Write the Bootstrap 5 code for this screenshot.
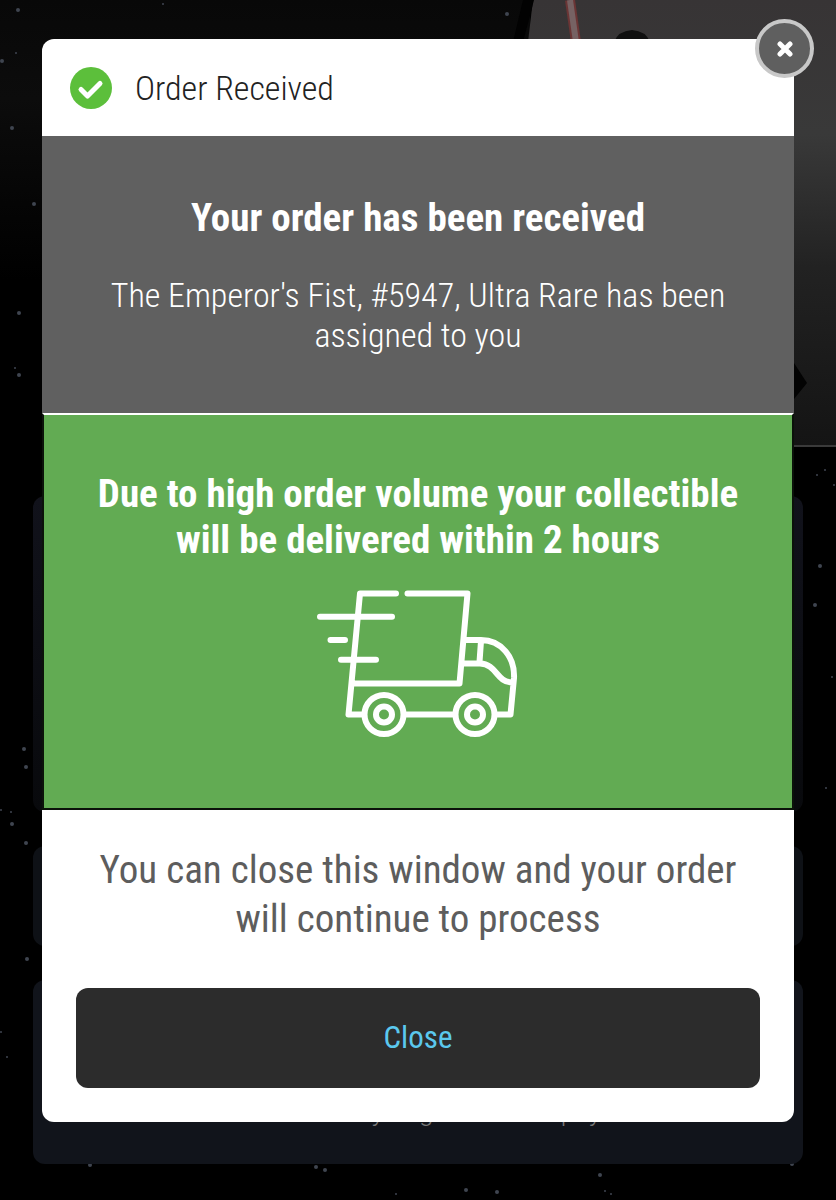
<!DOCTYPE html>
<html lang="en">
<head>
<meta charset="utf-8">
<meta name="viewport" content="width=device-width, initial-scale=1">
<title>Order Received</title>
<link href="https://cdn.jsdelivr.net/npm/bootstrap@5.3.0/dist/css/bootstrap.min.css" rel="stylesheet">
<style>
  body { background: #000; font-family: "Roboto Condensed", Roboto, "Liberation Sans", sans-serif; }
  .stage { display: grid; min-height: 100vh; overflow: hidden; }
  .stage > * { grid-area: 1 / 1; min-width: 0; }
  .scene { width: 100%; height: 100%; min-height: 0; contain: size; }
  .backdrop-page { padding: 496px 33px 36px; }
  .panel { border-radius: 12px; background: #11141b; }
  .panel-a { height: 316px; background: linear-gradient(#11121b, #08090c); }
  .panel-b { height: 100px; background: #0e1116; }
  .panel-c { height: 184px; color: #777; font: 300 26px/32px Roboto, sans-serif; padding-bottom: 36px; }
  .dialog-wrap { padding: 39px 42px; }
  .dialog { border-radius: 12px; background: #fff; }
  .light-text { font-family: "Roboto Condensed Light", "Roboto Condensed", sans-serif; font-weight: 300; font-size: 34px; line-height: 40px; }
  .dialog-head { min-height: 97px; padding: 0 28px; gap: 23px; }
  .dialog-head h1 { color: #222; }
  .received { background: #606060; padding: 59px 56px 58px; color: #fff; }
  .strong-text { font-size: 39px; line-height: 46px; font-weight: 700; }
  .received p { margin-top: 34px; }
  .delivery { background: #62ab53; border: 2px solid #0b120a; border-top-color: #fff; padding: 56px 48px 70px; color: #fff; }
  .truck { width: 204px; height: 150px; margin-top: 25px; }
  .dialog-foot { padding: 36px 34px 34px; color: #5d5d5d; }
  .dialog-foot p { font-size: 39px; line-height: 49px; margin-bottom: 44px; }
  .btn-dismiss { height: 100px; border-radius: 12px; font-size: 31px; background: #2c2c2c; color: #5bc8ee; }
  .btn-dismiss:hover { background: #383838; color: #5bc8ee; }
  .btn-x { width: 59px; height: 59px; top: -20px; right: -20px; border: 4px solid #c8c8c8; background: #5f5f5f; }
</style>
</head>
<body>
<div class="stage">
  <svg class="scene" viewBox="0 0 836 1200" preserveAspectRatio="xMidYMin slice" aria-hidden="true">
    <defs>
      <linearGradient id="sky" x2="0" y2="1"><stop stop-color="#080808"/><stop offset=".35" stop-color="#0c0c0c"/><stop offset="1" stop-color="#000"/></linearGradient>
      <linearGradient id="wall" x2="0" y2="1"><stop stop-color="#373435"/><stop offset=".3" stop-color="#393939"/><stop offset=".6" stop-color="#222"/><stop offset="1" stop-color="#141414"/></linearGradient>
    </defs>
    <path fill="#000" d="M0 0H836V1200H0z"/>
    <path fill="url(#sky)" d="M0 0H530V280H0z"/>
    <path fill="url(#wall)" d="M533 0H836V446H480z"/>
    <path fill="#020202" d="M523 0h11l-11 42h-10z"/>
    <path fill="#3a3a3a" d="M790 445h46v2h-46z"/>
    <path stroke="#6b3535" stroke-width="10" d="M570 0l6 42"/>
    <path stroke="#766263" stroke-width="6" d="M570 0l6 42"/>
    <path fill="#101010" d="M614 42q4-11 18-12 14 1 18 12z"/>
    <path fill="#030303" d="M794 363l13 20-13 16z"/>
    <g fill="#3f4550">
      <circle cx="18" cy="10" r="2"/><circle cx="2" cy="61" r="2"/><circle cx="16" cy="53" r="1"/><circle cx="12" cy="128" r="2"/><circle cx="34" cy="204" r="2"/><circle cx="19" cy="313" r="2"/><circle cx="15" cy="368" r="1"/><circle cx="19" cy="375" r="2"/><circle cx="507" cy="14" r="2"/><circle cx="163" cy="4" r="1"/>
      <circle cx="24" cy="749" r="2"/><circle cx="26" cy="767" r="2"/><circle cx="12" cy="824" r="2"/><circle cx="26" cy="843" r="2"/><circle cx="1" cy="810" r="1"/><circle cx="11" cy="812" r="1"/><circle cx="27" cy="959" r="2"/><circle cx="7" cy="1057" r="1"/><circle cx="1" cy="1032" r="1"/><circle cx="90" cy="1165" r="2"/>
      <circle cx="316" cy="1167" r="2"/><circle cx="325" cy="1170" r="2"/><circle cx="466" cy="1190" r="2"/><circle cx="497" cy="1192" r="2"/><circle cx="600" cy="1175" r="2"/><circle cx="605" cy="1191" r="1"/><circle cx="611" cy="1194" r="1"/><circle cx="792" cy="1164" r="2"/><circle cx="396" cy="1194" r="1"/>
      <circle cx="815" cy="605" r="2"/><circle cx="820" cy="566" r="2"/><circle cx="817" cy="475" r="1"/><circle cx="825" cy="470" r="1"/><circle cx="832" cy="677" r="1"/><circle cx="826" cy="788" r="1"/><circle cx="834" cy="485" r="1"/>
    </g>
  </svg>

  <div class="backdrop-page d-flex flex-column" aria-hidden="true">
    <div class="panel panel-a"></div>
    <div class="panel panel-b mt-auto"></div>
    <div class="panel panel-c mt-auto d-flex align-items-end justify-content-center">Order when you get items to pay</div>
  </div>

  <main class="dialog-wrap">
    <div class="dialog position-relative" role="dialog" aria-labelledby="dialog-title">
      <header class="dialog-head d-flex align-items-center">
        <svg width="42" height="42" viewBox="0 0 42 42" aria-hidden="true"><circle cx="21" cy="21" r="21" fill="#5cbf3b"/><path d="M11 22.500l6.500 6.500L30 16.500" fill="none" stroke="#fff" stroke-width="5" stroke-linecap="round" stroke-linejoin="round"/></svg>
        <h1 id="dialog-title" class="light-text m-0">Order Received</h1>
      </header>
      <section class="received text-center">
        <h2 class="strong-text m-0">Your order has been received</h2>
        <p class="light-text mb-0">The Emperor's Fist, #5947, Ultra Rare has been assigned to you</p>
      </section>
      <section class="delivery text-center">
        <h2 class="strong-text m-0">Due to high order volume your collectible will be delivered within 2 hours</h2>
        <svg class="truck" viewBox="316 588 204 150" fill="none" stroke="#fff" stroke-width="6" stroke-linecap="round" stroke-linejoin="round" aria-hidden="true">
          <path d="M396 593.500H360L348.500 714.500H364M407.500 593.500H467.500L459.500 683.500H355M320 616.700H392M330.500 640H345M341 659.700H376M465 640H481C501 640 515 657 514 678L510.500 714.500H497M464 663.500H480C497 664 496 682 512 682.500M481 641L479.500 662M406 714.500H453"/>
          <circle cx="384" cy="714.500" r="19.500"/><circle cx="384" cy="714.500" r="8"/>
          <circle cx="475" cy="714.500" r="19.500"/><circle cx="475" cy="714.500" r="8"/>
        </svg>
      </section>
      <footer class="dialog-foot text-center">
        <p>You can close this window and your order will continue to process</p>
        <button type="button" class="btn btn-dismiss w-100 border-0">Close</button>
      </footer>
      <button type="button" class="btn-x btn position-absolute rounded-circle p-0 d-flex align-items-center justify-content-center" aria-label="Close dialog">
        <svg width="16" height="16" viewBox="0 0 16 16" aria-hidden="true"><path d="M3 3l10 10M13 3L3 13" stroke="#fff" stroke-width="5" stroke-linecap="round"/></svg>
      </button>
    </div>
  </main>
</div>
<script src="https://cdn.jsdelivr.net/npm/bootstrap@5.3.0/dist/js/bootstrap.bundle.min.js"></script>
</body>
</html>
